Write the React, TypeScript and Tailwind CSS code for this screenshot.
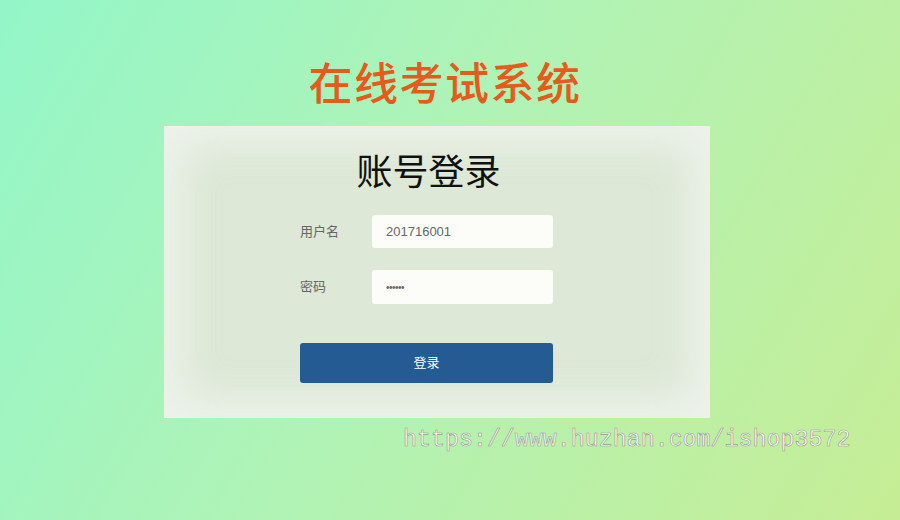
import React from "react";

const cjk = { fontFamily: '"Liberation Sans", "Noto Sans CJK SC", sans-serif' };

const App = () => {
  return (
    <div
      className="relative w-[900px] h-[520px] overflow-hidden bg-[linear-gradient(120deg,#93f6c8_0%,#aff3b6_45%,#c6ed95_100%)]"
      style={cjk}
    >
      <div className="flex flex-col items-center pt-[57px]">
        <h1 className="text-[44px] leading-[56px] font-medium text-[#e65a1b] tracking-[1.5px] ml-[-10px]">
          在线考试系统
        </h1>

        <div className="mt-[13px] ml-[-26px] w-[546px] h-[292px] bg-[#dde8d6] shadow-[inset_0_0_40px_18px_rgba(240,244,238,0.85)] flex flex-col items-center">
          <h2 className="mt-[25px] ml-[-17px] text-[36px] leading-[44px] text-[#111]">账号登录</h2>

          <div className="mt-[20px] ml-[-21px] w-[253px] flex flex-col">
            <div className="flex items-center h-[33px]">
              <span className="w-[72px] text-[13px] text-[#666]">用户名</span>
              <div className="w-[181px] h-[33px] bg-[#fcfdf9] rounded-[3px] flex items-center px-[14px] text-[13px] text-[#666]">
                201716001
              </div>
            </div>
            <div className="flex items-center h-[34px] mt-[22px]">
              <span className="w-[72px] text-[13px] text-[#666]">密码</span>
              <div className="w-[181px] h-[34px] bg-[#fcfdf9] rounded-[3px] flex items-center px-[14px] text-[10px] text-[#666] tracking-[-0.5px]">
                ••••••
              </div>
            </div>
            <button className="mt-[39px] w-[253px] h-[40px] rounded-[3px] bg-[#235b92] text-white text-[13px] flex items-center justify-center">
              登录
            </button>
          </div>
        </div>
      </div>

      <div
        className="absolute left-[403px] top-[425px] text-[23.3px] leading-[30px] text-[#f6f9f0] [-webkit-text-stroke:0.6px_#999]"
        style={{ fontFamily: '"Liberation Mono", monospace' }}
      >
        https://www.huzhan.com/ishop3572
      </div>
    </div>
  );
};

export default App;
